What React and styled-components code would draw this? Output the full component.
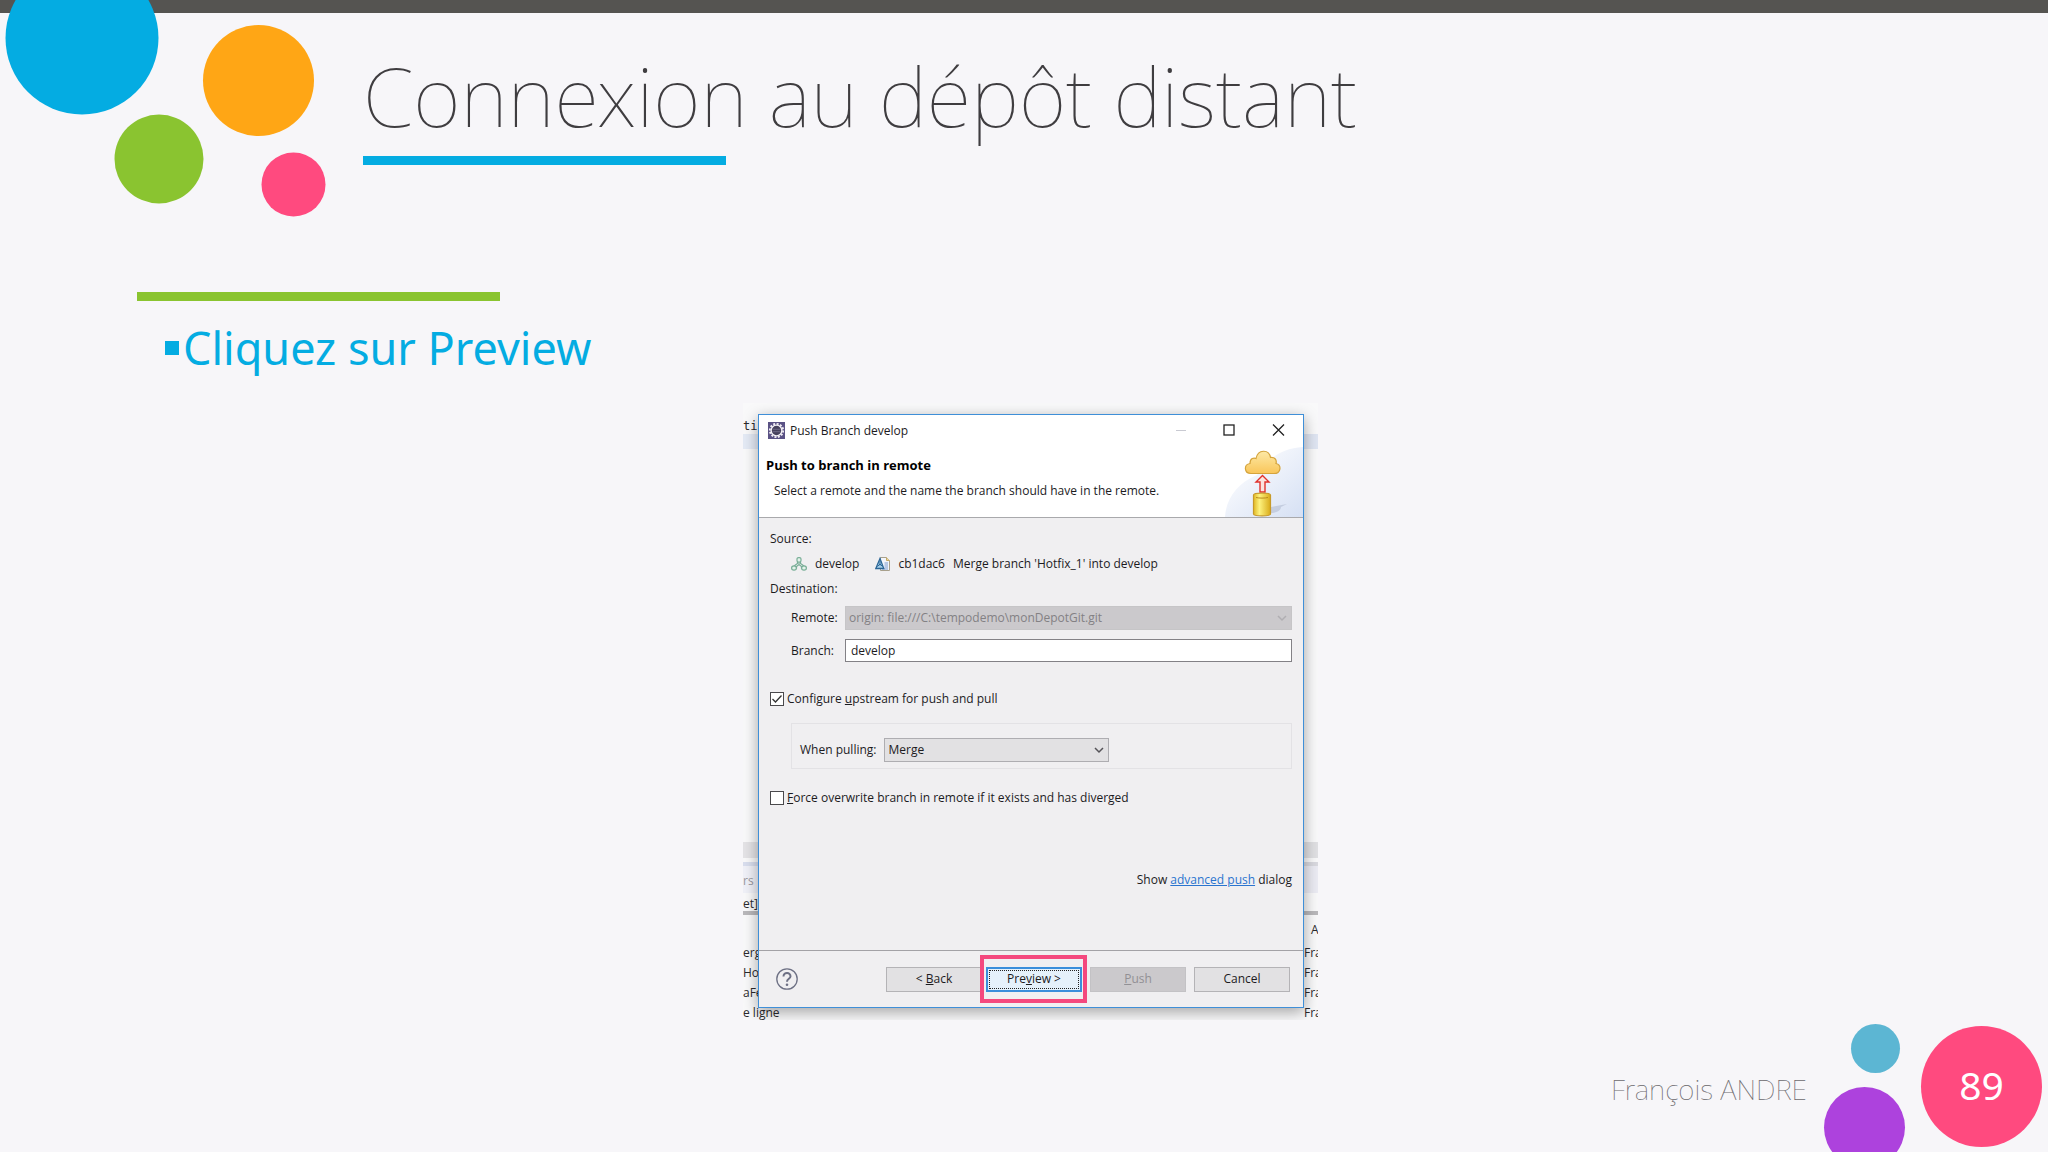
import React, { useState } from "react";
import styled, { createGlobalStyle } from "styled-components";

const GlobalStyle = createGlobalStyle`
  * {
    box-sizing: border-box;
  }
  body {
    margin: 0;
    background: #f7f6f9;
    font-family: "Noto Sans", "Open Sans", sans-serif;
  }
  h1, h2, p, ul, figure {
    margin: 0;
    padding: 0;
  }
`;

const Slide = styled.div`
  display: flex;
  flex-direction: column;
  min-height: 100vh;
  overflow: hidden;
`;

const TopBar = styled.div`
  height: 13px;
  background: #555451;
`;

const Header = styled.header`
  display: flex;
  align-items: flex-start;
  gap: 23px;
  height: 279px;
`;

const Bubbles = styled.svg`
  flex: none;
  width: 340px;
  height: 220px;
  margin-top: -13px;
`;

const Heading = styled.div`
  padding-top: 26px;
`;

const Title = styled.h1`
  font-size: 82px;
  font-weight: 100;
  line-height: 112px;
  color: #3f3d40;
`;

const Rule = styled.div`
  width: 363px;
  height: 9px;
  background: ${({ $color }) => $color};
`;

const TitleRule = styled(Rule)`
  margin-top: 5px;
`;

const Content = styled.main`
  display: flex;
  flex-direction: column;
  padding: 0 124px 0 137px;
`;

const Bullets = styled.ul`
  padding: 16px 0 25px 28px;
  list-style: none;
`;

const Bullet = styled.li`
  display: flex;
  align-items: center;
  gap: 4px;
  font-size: 45px;
  line-height: 61px;
  color: #04ace2;

  &::before {
    content: "";
    width: 14px;
    height: 14px;
    background: #04ace2;
  }
`;

const Figure = styled.figure`
  display: grid;
  grid-template-columns: 15px 546px 14px;
  align-self: center;
  padding: 11px 0 12px;
  overflow: hidden;
  background: #f9f9fa;
  font-family: "Open Sans", "Noto Sans", sans-serif;
`;

/* pieces of the editor window that show behind the dialog */
const Backdrop = styled.div`
  display: flex;
  flex-direction: column;
  min-width: 0;
  height: 594px;
  font-size: 12px;
  line-height: 22px;
  white-space: nowrap;
  color: #2b2a2d;
`;

const Code = styled.span`
  height: 20px;
  font-family: "DejaVu Sans Mono", monospace;
  line-height: 24px;
`;

const Band = styled.div`
  flex: none;
  height: ${({ $h }) => $h}px;
  margin-top: ${({ $gap }) => $gap || 0}px;
  background: ${({ $color }) => $color};
  color: #9a999e;
  line-height: 30px;
`;

const Cell = styled.span`
  flex: none;
  height: ${({ $h }) => $h || 20}px;
  padding-left: ${({ $pad }) => $pad || 0}px;
`;

const Dialog = styled.section`
  position: relative;
  z-index: 1;
  display: flex;
  flex-direction: column;
  height: 594px;
  border: 1px solid #3f8fd8;
  background: #f0eff1;
  box-shadow: 0 4px 14px rgba(0, 0, 0, 0.35);
  font-size: 12px;
  line-height: 16px;
  color: #1c1b1e;
`;

const TitleBar = styled.div`
  display: flex;
  align-items: center;
  height: 32px;
  padding: 0 18px 2px 9px;
  gap: 5px;
  background: #fff;
`;

const WindowTitle = styled.span`
  flex: 1;
  padding-top: 2px;
`;

const WindowButtons = styled.div`
  display: flex;
  gap: 36px;
`;

const WindowButton = styled.button`
  display: flex;
  padding: 0;
  border: 0;
  background: none;
`;

const Banner = styled.div`
  display: flex;
  justify-content: space-between;
  height: 71px;
  border-bottom: 1px solid #a9a9ac;
  background: #fff;
`;

const BannerText = styled.div`
  padding: 9px 0 0 7px;
`;

const BannerTitle = styled.h2`
  font-size: 13px;
  line-height: 18px;
  color: #000;
`;

const BannerNote = styled.p`
  padding: 9px 0 0 8px;
`;

const Form = styled.form`
  display: flex;
  flex: 1;
  flex-direction: column;
`;

const Fields = styled.div`
  display: flex;
  flex: 1;
  flex-direction: column;
  gap: 9px;
  padding: 13px 11px 0;
`;

const Source = styled.div`
  display: flex;
  align-items: center;
  gap: 8px;
  padding-left: 21px;
`;

const Commit = styled.div`
  display: flex;
  align-items: center;
  gap: 8px;
  padding-left: 8px;
`;

const Field = styled.div`
  display: grid;
  grid-template-columns: 54px 1fr;
  align-items: center;
  padding-left: 21px;
`;

const TextBox = styled.input`
  width: 100%;
  height: 23px;
  padding: 0 5px;
  border: 1px solid #838186;
  background: #fff;
  color: inherit;
  font: inherit;
`;

const SelectWrap = styled.div`
  display: grid;
  align-items: center;
  width: ${({ $width }) => $width || "100%"};

  > * {
    grid-area: 1 / 1;
  }

  svg {
    justify-self: end;
    margin-right: 4px;
    pointer-events: none;
  }
`;

const Select = styled.select`
  width: 100%;
  height: 24px;
  padding: 0 3px;
  appearance: none;
  border: 1px solid #aeadb1;
  border-radius: 0;
  background: #e2e1e3;
  color: inherit;
  font: inherit;

  &:disabled {
    border-color: #c6c5c7;
    background: #cbc9cc;
    color: #838184;
    opacity: 1;
  }
`;

const CheckRow = styled.label`
  display: flex;
  align-items: center;
  gap: 3px;
  margin-top: ${({ $top }) => $top}px;
`;

const CheckBox = styled.input`
  width: 14px;
  height: 14px;
  margin: 0;
  appearance: none;
  border: 1px solid #4a494c;
  background: #fff;

  &:checked {
    background: #fff
      url("data:image/svg+xml,%3Csvg xmlns='http://www.w3.org/2000/svg' viewBox='0 0 12 12'%3E%3Cpath d='M1.5 6 4.5 9 10.5 2.5' fill='none' stroke='%23333' stroke-width='1.3'/%3E%3C/svg%3E");
  }
`;

const PullGroup = styled.div`
  display: flex;
  align-items: center;
  gap: 8px;
  height: 46px;
  margin: 7px 0 0 21px;
  padding: 8px 8px 0;
  border: 1px solid #e3e2e5;
`;

const Advanced = styled.p`
  padding-top: 57px;
  text-align: right;

  a {
    color: #2a74cf;
  }
`;

const DialogFooter = styled.div`
  display: flex;
  align-items: center;
  justify-content: space-between;
  height: 57px;
  padding: 0 13px 0 17px;
  border-top: 1px solid #a3a2a6;
`;

const Help = styled.button`
  display: flex;
  padding: 0;
  border: 0;
  background: none;
`;

const Buttons = styled.div`
  display: flex;
  gap: 8px;
`;

const Steps = styled.div`
  display: flex;
  gap: 4px;
`;

const Button = styled.button`
  width: 96px;
  height: 25px;
  padding: 0;
  border: 1px solid #b4b3b6;
  background: #e2e1e3;
  color: inherit;
  font: inherit;

  &:disabled {
    border-color: #c3c2c5;
    background: #cbc9cc;
    color: #929094;
  }
`;

const DefaultButton = styled(Button)`
  position: relative;
  border: 2px solid #3a8edb;
  background: #e5f1fb;
  outline: 1px dotted #222;
  outline-offset: -4px;

  &::after {
    content: "";
    position: absolute;
    inset: -14px -7px -13px -8px;
    border: 4px solid #f4487e;
  }
`;

const Footer = styled.footer`
  display: flex;
  align-items: flex-start;
  justify-content: flex-end;
  height: 128px;
  margin-top: auto;
  padding-right: 6px;
  overflow: hidden;
`;

const Author = styled.span`
  padding: 46px 17px 0 0;
  font-size: 28px;
  font-weight: 100;
  line-height: 38px;
  color: #6b696d;
`;

const Dots = styled.div`
  display: flex;
  flex-direction: column;
  align-items: center;
  gap: 14px;
  padding-right: 16px;
`;

const Dot = styled.div`
  flex: none;
  width: ${({ $size }) => $size}px;
  height: ${({ $size }) => $size}px;
  margin-left: ${({ $shift }) => $shift || 0}px;
  border-radius: 50%;
  background: ${({ $color }) => $color};
`;

const PageNumber = styled.div`
  display: flex;
  align-items: center;
  justify-content: center;
  width: 121px;
  height: 121px;
  margin-top: 2px;
  padding-bottom: 5px;
  border-radius: 50%;
  background: #ff4a7f;
  color: #fff;
  font-size: 39px;
`;

const Chevron = ({ color }) => (
  <svg width="12" height="12" viewBox="0 0 12 12" fill="none" stroke={color} strokeWidth="1.5">
    <path d="M2 4l4 4 4-4" />
  </svg>
);

const EclipseIcon = () => (
  <svg width="17" height="17" viewBox="0 0 17 17">
    <rect width="17" height="17" fill="#5a5285" />
    <circle cx="8.5" cy="8.5" r="6.7" fill="none" stroke="#f3f0f5" strokeWidth="1.8" strokeDasharray="2 1.5" />
    <circle cx="8.5" cy="8.5" r="5.4" fill="#45405c" stroke="#f3f0f5" strokeWidth="1.4" />
    <path d="M4.5 7.3h8M4.5 9.7h8" stroke="#77718f" strokeWidth="0.8" />
  </svg>
);

const BranchIcon = () => (
  <svg width="16" height="16" viewBox="0 0 16 16" fill="#e3f2ea" stroke="#79ae97" strokeWidth="1.2">
    <path d="M6.5 5v2.5L3 10M9.5 5v2.5L13 10" fill="none" />
    <rect x="6" y="1.6" width="4" height="4.4" rx="1.5" />
    <path d="M8 6v3M5.5 12.5v-2L8 8.500l2.500 2v2" fill="none" />
    <ellipse cx="3" cy="12" rx="2.4" ry="2.2" />
    <ellipse cx="13" cy="12" rx="2.4" ry="2.2" />
  </svg>
);

const CommitIcon = () => (
  <svg width="15" height="16" viewBox="0 0 15 16">
    <path d="M5.5 1.5h6l3 3v10h-9z" fill="#f3f5fb" stroke="#a8a08c" />
    <path d="M11.5 1.5v3h3" fill="#efd795" stroke="#c2a868" />
    <path d="M9.5 7h3.5M9.5 9h3.5M9.5 11h3.5M7 13h6" stroke="#7d9cd0" />
    <path d="M5 2.5L.8 12.5h8z" fill="#a6cfe9" stroke="#2c6696" strokeWidth="1.3" />
    <path d="M5 5v4.5M2.5 10.5L5 8l2.5 2.5" fill="none" stroke="#2c6696" />
  </svg>
);

const PushArt = () => (
  <svg width="80" height="70" viewBox="0 0 80 70">
    <defs>
      <linearGradient id="sky" x1="0" y1="0" x2="1" y2="1">
        <stop offset="0.1" stopColor="#fff" />
        <stop offset="1" stopColor="#cbd8f1" />
      </linearGradient>
      <linearGradient id="cloud" x1="0" y1="0" x2="0" y2="1">
        <stop offset="0" stopColor="#fde9a6" />
        <stop offset="1" stopColor="#f9c65a" />
      </linearGradient>
      <linearGradient id="drum" x1="0" y1="0" x2="1" y2="0">
        <stop offset="0" stopColor="#e0b824" />
        <stop offset="0.35" stopColor="#fdf27e" />
        <stop offset="1" stopColor="#d9ab19" />
      </linearGradient>
    </defs>
    <path d="M2 70C3 52 14 36 34 28C46 10 60 1 80 0V70z" fill="url(#sky)" opacity="0.8" />
    <path d="M48 66V60L64 57L58 60C58 63 54 66 48 66z" fill="#a9b3c9" opacity="0.5" />
    <path
      d="M28 26.5c-7 0-7.500-9-1-10C27 11 31 10.500 33 11.500C35 2 46 2 47.500 10.500C52 10 54 13 53 16.500C59 18 58 26.500 51 26.500z"
      fill="url(#cloud)"
      stroke="#d5a43c"
      strokeWidth="1.2"
    />
    <path d="M39.5 28.5l6.5 6.5H42v10h-5v-10h-4z" fill="#fbe3df" stroke="#e0322c" strokeWidth="1.4" />
    <path d="M30.5 48c0-2.5 17-2.5 17 0v19c0 2.5-17 2.5-17 0z" fill="url(#drum)" stroke="#c79a2a" strokeWidth="1.2" />
    <path d="M33 50.5c3 .8 9 .8 12 0" fill="none" stroke="#b98b1d" />
  </svg>
);

const PushDialog = () => {
  const [upstream, setUpstream] = useState(true);
  const [force, setForce] = useState(false);
  return (
    <Dialog aria-label="Push Branch develop">
      <TitleBar>
        <EclipseIcon />
        <WindowTitle>Push Branch develop</WindowTitle>
        <WindowButtons>
          <WindowButton aria-label="Minimize" disabled>
            <svg width="12" height="12" stroke="#c9cad2">
              <path d="M1 6.5h10" />
            </svg>
          </WindowButton>
          <WindowButton aria-label="Maximize">
            <svg width="13" height="12" fill="none" stroke="#222">
              <rect x="1" y="1" width="10" height="10" strokeWidth="1.3" />
            </svg>
          </WindowButton>
          <WindowButton aria-label="Close">
            <svg width="13" height="12" stroke="#222" strokeWidth="1.3">
              <path d="M1 .5l11 11M12 .5l-11 11" />
            </svg>
          </WindowButton>
        </WindowButtons>
      </TitleBar>
      <Banner>
        <BannerText>
          <BannerTitle>Push to branch in remote</BannerTitle>
          <BannerNote>Select a remote and the name the branch should have in the remote.</BannerNote>
        </BannerText>
        <PushArt />
      </Banner>
      <Form onSubmit={(e) => e.preventDefault()}>
        <Fields>
          <div>Source:</div>
          <Source>
            <BranchIcon />
            <span>develop</span>
            <Commit>
              <CommitIcon />
              <span>cb1dac6</span>
              <span>Merge branch 'Hotfix_1' into develop</span>
            </Commit>
          </Source>
          <div>Destination:</div>
          <Field>
            <label htmlFor="remote">Remote:</label>
            <SelectWrap>
              <Select id="remote" disabled>
                <option>origin: file:///C:\tempodemo\monDepotGit.git</option>
              </Select>
              <Chevron color="#b0aeb2" />
            </SelectWrap>
          </Field>
          <Field>
            <label htmlFor="branch">Branch:</label>
            <TextBox id="branch" type="text" defaultValue="develop" />
          </Field>
          <CheckRow $top={20}>
            <CheckBox type="checkbox" checked={upstream} onChange={() => setUpstream(!upstream)} />
            <span>
              Configure <u>u</u>pstream for push and pull
            </span>
          </CheckRow>
          <PullGroup>
            <label htmlFor="pull">When pulling:</label>
            <SelectWrap $width="225px">
              <Select id="pull" defaultValue="Merge">
                <option>Merge</option>
                <option>Rebase</option>
              </Select>
              <Chevron color="#555358" />
            </SelectWrap>
          </PullGroup>
          <CheckRow $top={12}>
            <CheckBox type="checkbox" checked={force} onChange={() => setForce(!force)} />
            <span>
              <u>F</u>orce overwrite branch in remote if it exists and has diverged
            </span>
          </CheckRow>
          <Advanced>
            Show <a href="#advanced">advanced push</a> dialog
          </Advanced>
        </Fields>
        <DialogFooter>
          <Help type="button" aria-label="Help">
            <svg width="22" height="22" viewBox="0 0 22 22" fill="none" stroke="#6d7084">
              <circle cx="11" cy="11" r="10.2" strokeWidth="1.3" />
              <path d="M7.5 8.5c0-5 7.3-4.5 7 0c-.2 2.3-3.5 2.5-3.5 5.2" strokeWidth="2" />
              <circle cx="11" cy="16.7" r="1.3" fill="#6d7084" stroke="none" />
            </svg>
          </Help>
          <Buttons>
            <Steps>
              <Button type="button">
                &lt; <u>B</u>ack
              </Button>
              <DefaultButton type="button">
                Pre<u>v</u>iew &gt;
              </DefaultButton>
            </Steps>
            <Button type="button" disabled>
              <u>P</u>ush
            </Button>
            <Button type="button">Cancel</Button>
          </Buttons>
        </DialogFooter>
      </Form>
    </Dialog>
  );
};

const App = () => {
  return (
    <Slide>
      <GlobalStyle />
      <TopBar />
      <Header>
        <Bubbles viewBox="0 0 340 220">
          <circle cx="82" cy="38" r="76.5" fill="#04ace2" />
          <circle cx="258.5" cy="80.5" r="55.5" fill="#ffa615" />
          <circle cx="159" cy="159" r="44.5" fill="#8ac430" />
          <circle cx="293.5" cy="184.5" r="32" fill="#ff4a7f" />
        </Bubbles>
        <Heading>
          <Title>Connexion au dépôt distant</Title>
          <TitleRule $color="#04ace2" />
        </Heading>
      </Header>
      <Content>
        <Rule $color="#8ac430" />
        <Bullets>
          <Bullet>Cliquez sur Preview</Bullet>
        </Bullets>
        <Figure>
          <Backdrop>
            <Code>ti</Code>
            <Band $h={15} $color="#e4eaf5" />
            <Band $h={16} $gap={393} $color="#e4e3e6" />
            <Band $h={4} $gap={4} $color="#d9deee" />
            <Band $h={27} $color="#f0f1f8">
              rs
            </Band>
            <Cell $h={18}>et]</Cell>
            <Band $h={4} $color="#b9b8bb" />
            <Band $h={27} $color="transparent" />
            <Cell>erg</Cell>
            <Cell>Hot</Cell>
            <Cell>aFe</Cell>
            <Cell>e ligne</Cell>
          </Backdrop>
          <PushDialog />
          <Backdrop>
            <Band $h={15} $gap={20} $color="#dfe5f2" />
            <Band $h={16} $gap={393} $color="#e0e0e3" />
            <Band $h={4} $gap={4} $color="#d9d9df" />
            <Band $h={27} $color="#ebebf3" />
            <Band $h={4} $gap={18} $color="#b9b8bb" />
            <Band $h={4} $color="transparent" />
            <Cell $h={23} $pad={7}>
              A
            </Cell>
            <Cell>Fra</Cell>
            <Cell>Fra</Cell>
            <Cell>Fra</Cell>
            <Cell>Fra</Cell>
          </Backdrop>
        </Figure>
      </Content>
      <Footer>
        <Author>François ANDRE</Author>
        <Dots>
          <Dot $size={49} $shift={22} $color="#5cb6d3" />
          <Dot $size={81} $color="#ad42dd" />
        </Dots>
        <PageNumber>89</PageNumber>
      </Footer>
    </Slide>
  );
};

export default App;
